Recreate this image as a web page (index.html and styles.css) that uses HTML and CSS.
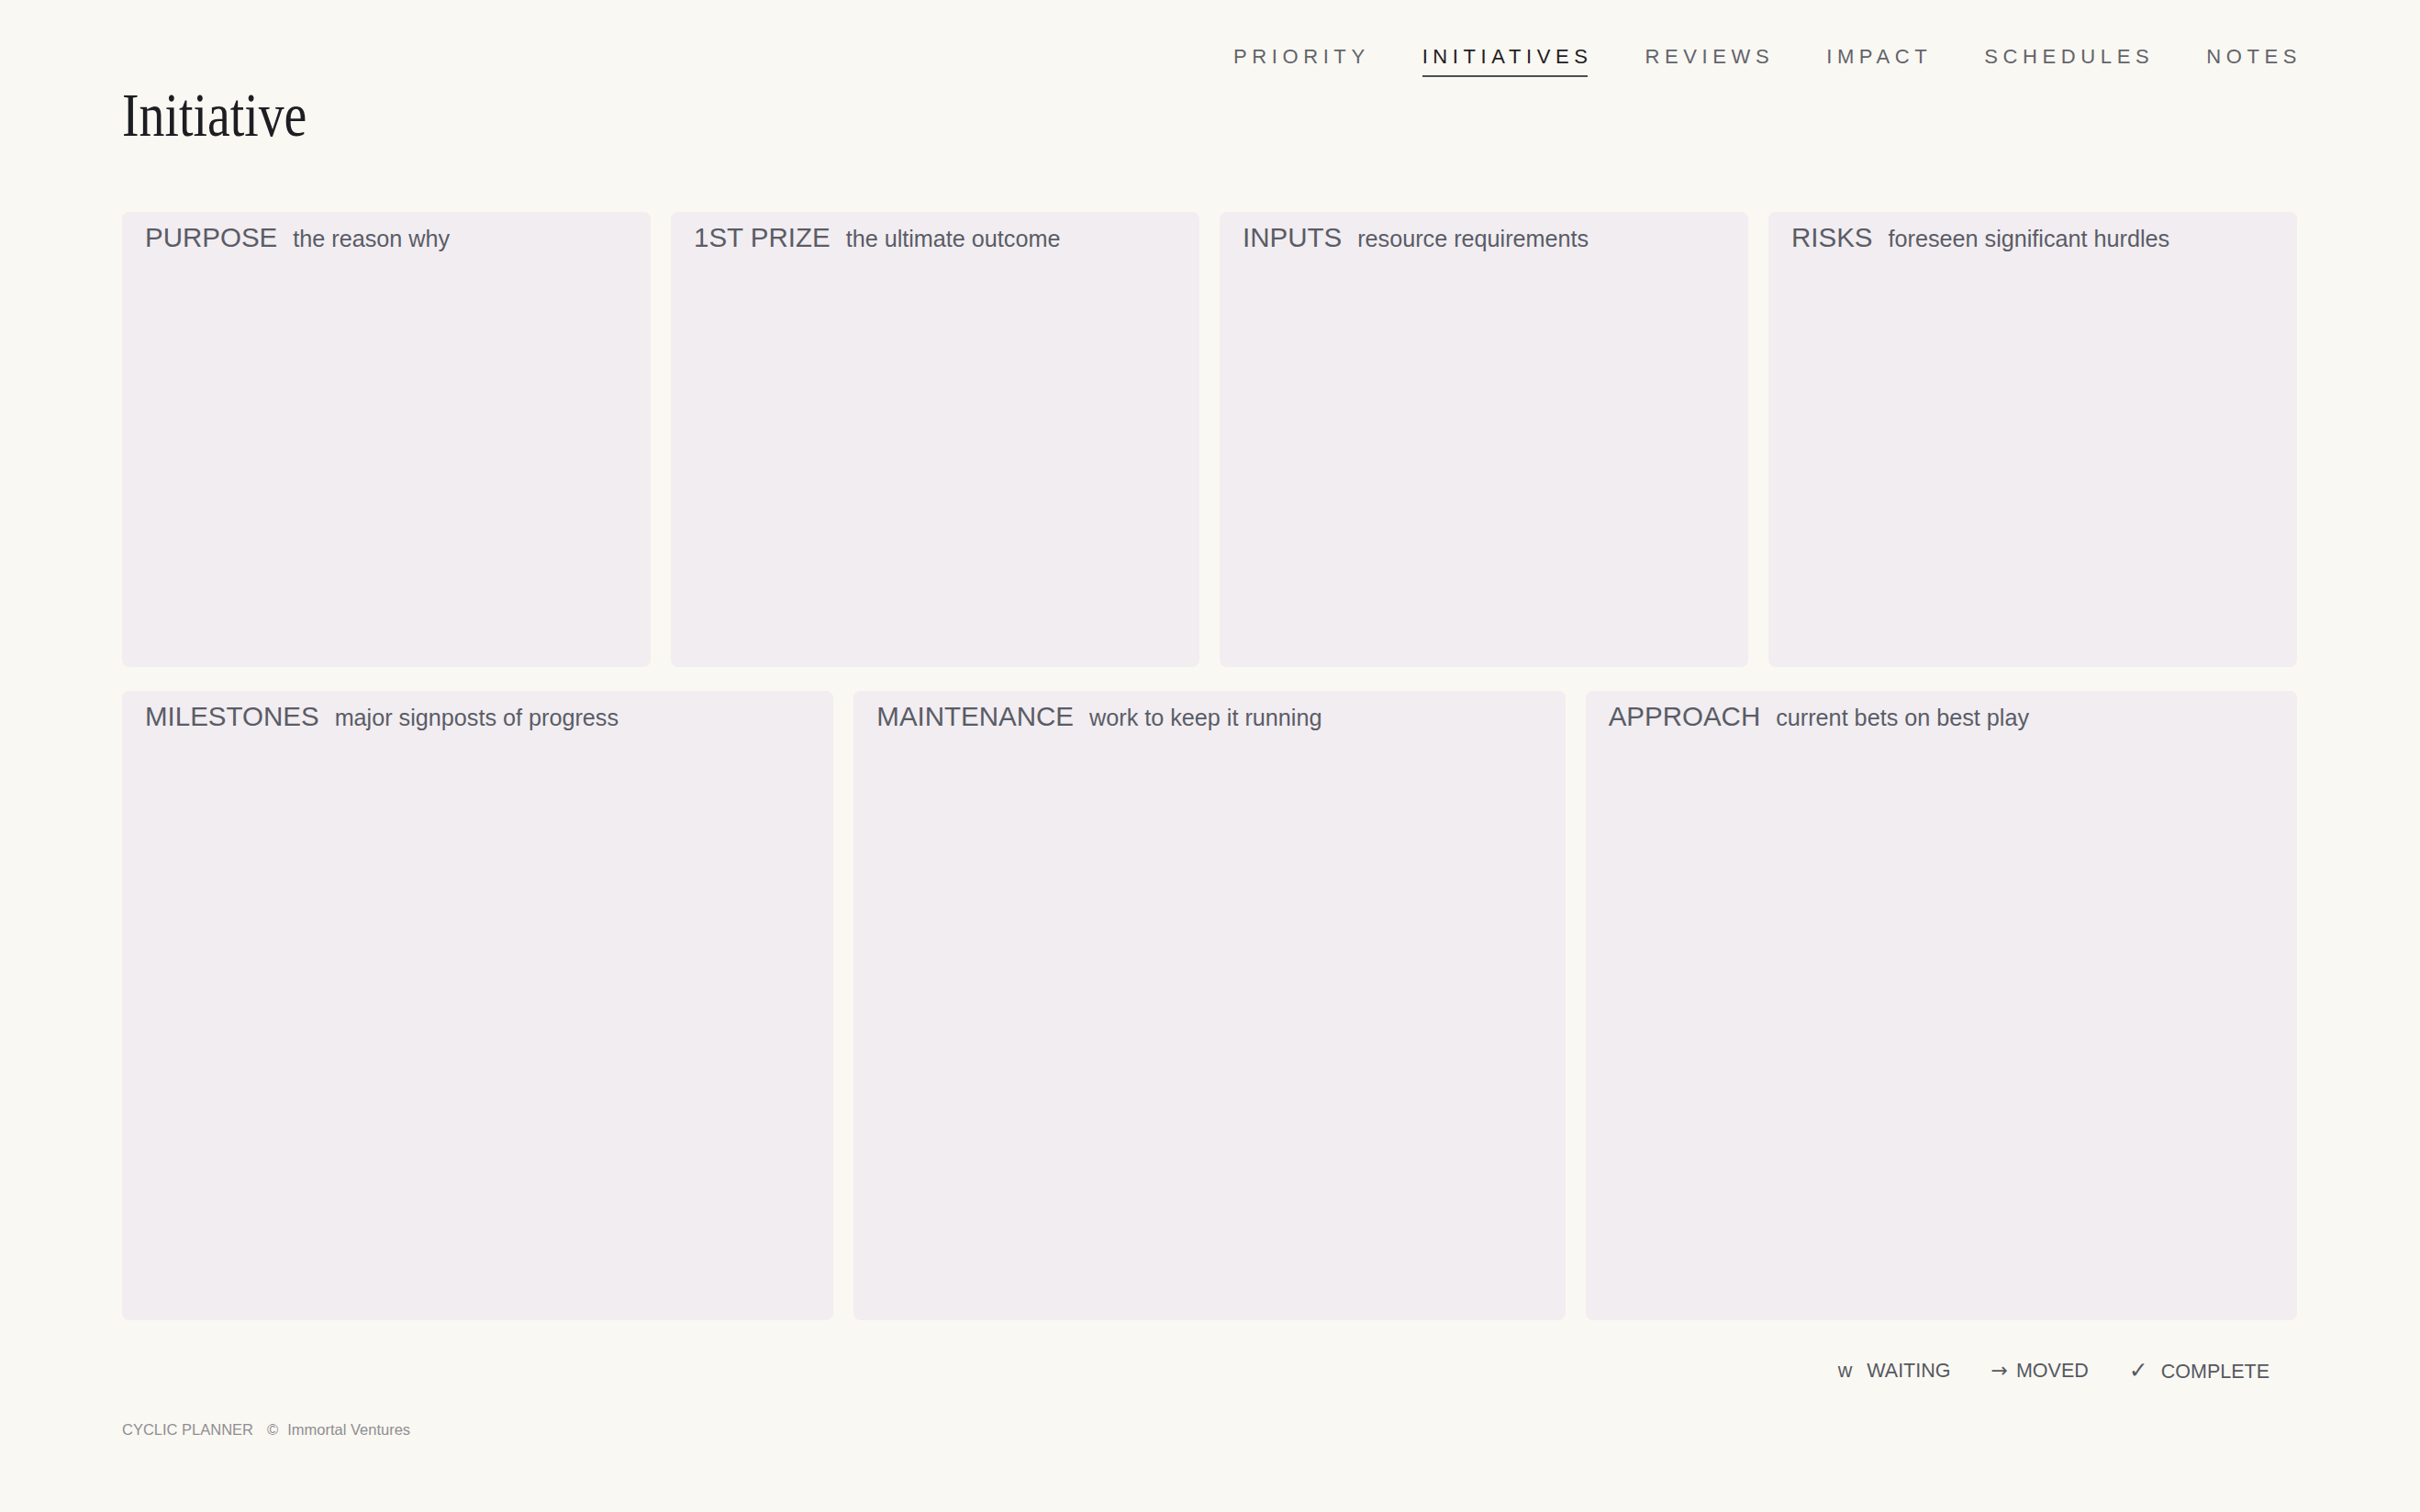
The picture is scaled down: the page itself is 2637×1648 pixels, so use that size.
FILE: index.html
```html
<!DOCTYPE html>
<html lang="en">
<head>
<meta charset="utf-8">
<title>Initiative</title>
<link rel="stylesheet" href="styles.css">
</head>
<body>
<div class="page">
  <header class="header">
    <nav class="nav">
      <a class="nav-item">PRIORITY</a>
      <a class="nav-item active">INITIATIVES</a>
      <a class="nav-item">REVIEWS</a>
      <a class="nav-item">IMPACT</a>
      <a class="nav-item">SCHEDULES</a>
      <a class="nav-item">NOTES</a>
    </nav>
    <h1 class="title"><span class="title-text">Initiative</span></h1>
  </header>

  <main class="canvas">
    <section class="row row-4">
      <div class="card"><div class="card-head"><span class="card-label">PURPOSE</span><span class="card-sub">the reason why</span></div></div>
      <div class="card"><div class="card-head"><span class="card-label">1ST PRIZE</span><span class="card-sub">the ultimate outcome</span></div></div>
      <div class="card"><div class="card-head"><span class="card-label">INPUTS</span><span class="card-sub">resource requirements</span></div></div>
      <div class="card"><div class="card-head"><span class="card-label">RISKS</span><span class="card-sub">foreseen significant hurdles</span></div></div>
    </section>
    <section class="row row-3">
      <div class="card"><div class="card-head"><span class="card-label">MILESTONES</span><span class="card-sub">major signposts of progress</span></div></div>
      <div class="card"><div class="card-head"><span class="card-label">MAINTENANCE</span><span class="card-sub">work to keep it running</span></div></div>
      <div class="card"><div class="card-head"><span class="card-label">APPROACH</span><span class="card-sub">current bets on best play</span></div></div>
    </section>
  </main>

  <div class="legend">
    <span class="legend-item"><span class="sym sym-w">w</span><span>WAITING</span></span>
    <span class="legend-item"><span class="sym sym-arrow">&rarr;</span><span>MOVED</span></span>
    <span class="legend-item"><span class="sym sym-check">&#10003;</span><span>COMPLETE</span></span>
  </div>

  <footer class="footer">
    <span class="brand">CYCLIC PLANNER</span><span class="copy">&copy;</span><span class="owner">Immortal Ventures</span>
  </footer>
</div>
</body>
</html>
```

FILE: styles.css
```css
html, body {
  margin: 0;
  padding: 0;
  background: #faf8f2;
}

body {
  font-family: "Liberation Sans", Arial, sans-serif;
  color: #5a5c66;
}

.page {
  padding: 0 134px 60px 133px;
}

/* Header */
.header {
  display: flex;
  flex-direction: column;
}

.nav {
  display: flex;
  justify-content: flex-end;
  gap: 57px;
  padding-top: 47px;
  margin-right: -5px;
}

.nav-item {
  position: relative;
  font-size: 22px;
  line-height: 30px;
  letter-spacing: 5.6px;
  color: #62646c;
  text-decoration: none;
}

.nav-item.active {
  color: #1f2024;
}

.nav-item.active::after {
  content: "";
  position: absolute;
  left: 0;
  right: 5.6px;
  top: 35px;
  height: 2px;
  background: #4b4d55;
}

.title {
  margin: 14px 0 0 0;
  font-family: "Liberation Serif", "Times New Roman", serif;
  font-weight: 400;
  font-size: 68px;
  line-height: 68px;
  color: #1d1e22;
}

.title-text {
  display: inline-block;
  transform: scaleX(0.82);
  transform-origin: left center;
}

/* Canvas */
.canvas {
  margin-top: 72px;
  display: flex;
  flex-direction: column;
  gap: 26px;
}

.row {
  display: grid;
  gap: 22px;
}

.row-4 {
  grid-template-columns: repeat(4, 1fr);
  height: 496px;
}

.row-3 {
  grid-template-columns: repeat(3, 1fr);
  height: 686px;
}

.card {
  background: #f1edf1;
  border-radius: 8px;
  padding: 10px 25px;
}

.card-head {
  display: flex;
  align-items: baseline;
  gap: 17px;
  line-height: 36px;
}

.card-label {
  font-size: 29.5px;
  color: #5a5c66;
}

.card-sub {
  font-size: 25.2px;
  color: #5a5c66;
}

/* Legend */
.legend {
  display: flex;
  justify-content: flex-end;
  gap: 44px;
  margin-top: 40px;
  padding-right: 30px;
  font-size: 21.5px;
  line-height: 30px;
  color: #555863;
}

.legend-item {
  display: flex;
  align-items: baseline;
}

.sym-w {
  margin-right: 16px;
}

.sym-arrow {
  margin-right: 9px;
  font-family: "DejaVu Sans", sans-serif;
  font-size: 22px;
}

.sym-check {
  margin-right: 14px;
  font-family: "DejaVu Sans", sans-serif;
  font-size: 25px;
}

/* Footer */
.footer {
  margin-top: 38px;
  font-size: 16.5px;
  line-height: 20px;
  color: #8e8e94;
}

.copy {
  margin: 0 10px 0 15px;
}
```
